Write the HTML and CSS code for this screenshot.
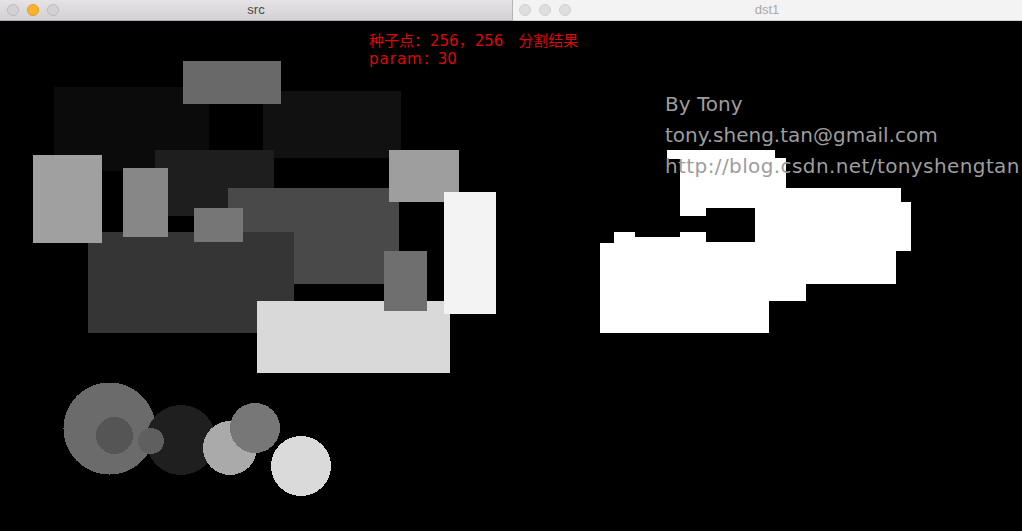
FILE: index.html
```html
<!DOCTYPE html>
<html lang="zh-CN">
<head>
<meta charset="utf-8">
<title>src / dst1</title>
<link rel="stylesheet" href="styles.css">
</head>
<body>
<div class="desktop">
  <section class="win win-src">
    <header class="titlebar titlebar-active">
      <div class="lights">
        <span class="light"></span>
        <span class="light light-min"></span>
        <span class="light"></span>
      </div>
      <span class="title">src</span>
    </header>
    <div class="canvas canvas-src">
      <svg class="scene" width="512" height="510" viewBox="0 21 512 510" shape-rendering="crispEdges">
        <rect x="54" y="87" width="155" height="84" fill="#0b0b0b"/>
        <rect x="263" y="91" width="138" height="67" fill="#111111"/>
        <rect x="183" y="61" width="98" height="43" fill="#696969"/>
        <rect x="155" y="150" width="119" height="66" fill="#1e1e1e"/>
        <rect x="228" y="188" width="171" height="96" fill="#494949"/>
        <rect x="88" y="232" width="206" height="101" fill="#353535"/>
        <rect x="194" y="208" width="49" height="34" fill="#767676"/>
        <rect x="123" y="168" width="45" height="69" fill="#878787"/>
        <rect x="33" y="155" width="69" height="88" fill="#a0a0a0"/>
        <rect x="389" y="150" width="70" height="52" fill="#9e9e9e"/>
        <rect x="257" y="301" width="193" height="72" fill="#d9d9d9"/>
        <rect x="384" y="251" width="43" height="60" fill="#6f6f6f"/>
        <rect x="444" y="192" width="52" height="122" fill="#f3f3f3"/>
        <circle cx="109.5" cy="428.5" r="46" fill="#6b6b6b"/>
        <circle cx="114.5" cy="435.5" r="18.5" fill="#555555"/>
        <circle cx="181" cy="440" r="35" fill="#1f1f1f"/>
        <circle cx="151" cy="441" r="13" fill="#5f5f5f"/>
        <circle cx="230" cy="448" r="27" fill="#aaaaaa"/>
        <circle cx="255" cy="428" r="25" fill="#777777"/>
        <circle cx="301" cy="466" r="30" fill="#dadada"/>
      </svg>
      <div class="caption">
        <div class="caption-line">种子点：<span class="num">256</span>，<span class="num">256</span><span class="gap"></span>分割结果</div>
        <div class="caption-line"><span class="wide">param</span>：30</div>
      </div>
    </div>
  </section>
  <section class="win win-dst">
    <header class="titlebar titlebar-inactive">
      <div class="lights">
        <span class="light"></span>
        <span class="light"></span>
        <span class="light"></span>
      </div>
      <span class="title">dst1</span>
    </header>
    <div class="canvas">
      <svg class="scene" width="510" height="510" viewBox="512 21 510 510" shape-rendering="crispEdges">
        <g fill="#ffffff">
          <rect x="667" y="150" width="108" height="9"/>
          <rect x="680" y="158" width="106" height="50"/>
          <rect x="680" y="208" width="26" height="8"/>
          <rect x="755" y="188" width="146" height="14"/>
          <rect x="755" y="202" width="156" height="49"/>
          <rect x="706" y="242" width="49" height="9"/>
          <rect x="614" y="232" width="21" height="11"/>
          <rect x="680" y="232" width="26" height="11"/>
          <rect x="614" y="237" width="92" height="6"/>
          <rect x="600" y="243" width="296" height="41"/>
          <rect x="600" y="284" width="206" height="17"/>
          <rect x="600" y="301" width="169" height="32"/>
        </g>
      </svg>
      <div class="credits">
        <div class="credit-line">By Tony</div>
        <div class="credit-line">tony.sheng.tan@gmail.com</div>
        <div class="credit-line credit-url">http://blog.csdn.net/tonyshengtan</div>
      </div>
    </div>
  </section>
</div>
</body>
</html>
```
FILE: styles.css
```css
html, body {
  margin: 0;
  padding: 0;
  background: #000;
}

.desktop {
  display: flex;
  width: 1022px;
  height: 531px;
  overflow: hidden;
}

.win {
  display: flex;
  flex-direction: column;
}

.win-src {
  width: 512px;
  position: relative;
  z-index: 2;
}

.win-dst {
  width: 510px;
  position: relative;
  z-index: 1;
}

.titlebar {
  height: 20px;
  display: grid;
  grid-template-columns: 1fr auto 1fr;
  align-items: center;
  font-family: "Liberation Sans", Arial, sans-serif;
  font-size: 13px;
  line-height: 20px;
  box-sizing: content-box;
}

.titlebar-active {
  background: linear-gradient(#e5e3e5, #d3d1d3);
  border-bottom: 1px solid #b0aeb0;
  border-right: 1px solid #b4b2b4;
  margin-right: -1px;
}

.titlebar-inactive {
  background: #f3f3f3;
  border-bottom: 1px solid #cfcfcf;
}

.lights {
  display: flex;
  gap: 8px;
  padding-left: 7px;
  grid-column: 1;
  grid-row: 1;
}

.light {
  width: 10px;
  height: 10px;
  border-radius: 50%;
  background: #d3d1d3;
  border: 1px solid #bcbabc;
}

.titlebar-active .light-min {
  background: #fdb22c;
  border-color: #e09c26;
}

.titlebar-inactive .light {
  background: #dedede;
  border-color: #d0d0d0;
}

.title {
  grid-column: 2;
  grid-row: 1;
  text-align: center;
}

.titlebar-active .title {
  color: #4a4a4a;
}

.titlebar-inactive .title {
  color: #a9a9a9;
}

.canvas {
  position: relative;
  flex: 1;
  background: #000;
  overflow: hidden;
}

.canvas-src {
  overflow: visible;
}

.scene {
  display: block;
}

.caption {
  position: absolute;
  left: 369px;
  top: 11px;
  color: #dc0808;
  font-family: "DejaVu Sans", "Noto Sans CJK SC", sans-serif;
  font-size: 15px;
  line-height: 18px;
  white-space: nowrap;
}

.caption-line {
  height: 18px;
}

.num {
  margin-left: 1px;
}

.gap {
  display: inline-block;
  width: 15px;
}

.wide {
  letter-spacing: 1px;
}

.credits {
  position: absolute;
  left: 153px;
  top: 68px;
  color: #9d9d9d;
  font-family: "DejaVu Sans", sans-serif;
  font-size: 20px;
  line-height: 31px;
  white-space: nowrap;
}

.credit-url {
  letter-spacing: 0.4px;
}
```
